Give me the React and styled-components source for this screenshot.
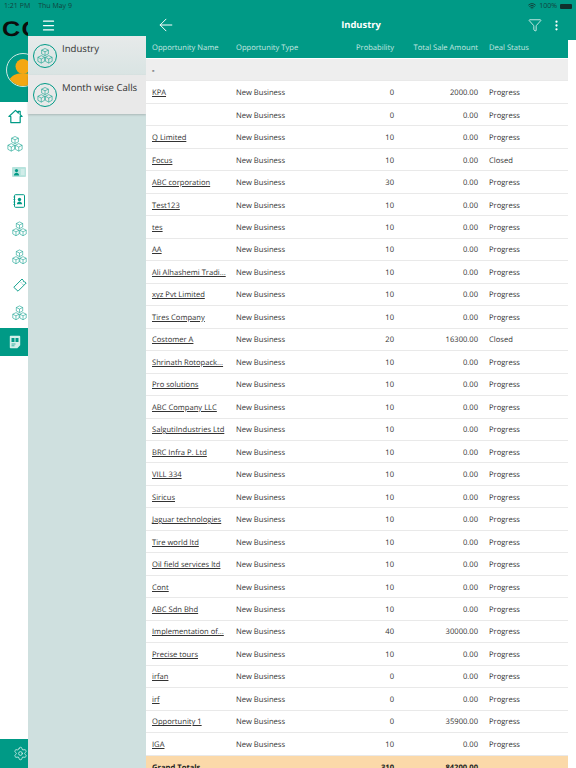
import React from 'react';
import styled, { createGlobalStyle } from 'styled-components';
import { ArrowLeft, Funnel, EllipsisVertical, Settings, Menu, Wifi } from 'lucide-react';

const teal = '#009a86';

const GlobalStyle = createGlobalStyle`
  html, body { margin: 0; padding: 0; height: 100%; }
  body {
    font-family: "Open Sans", "Noto Sans", "Liberation Sans", sans-serif;
    background: #fff;
    overflow: hidden;
    text-rendering: geometricPrecision;
  }
`;

const Page = styled.div`
  position: relative;
  display: flex;
  width: 576px;
  height: 768px;
  overflow: hidden;
`;

const StatusBar = styled.div`
  position: absolute;
  top: 0;
  left: 0;
  right: 0;
  height: 12px;
  display: flex;
  justify-content: space-between;
  align-items: center;
  padding: 0 4px;
  font-size: 7px;
  color: #12433d;
  z-index: 5;
`;

const StatusGroup = styled.div`
  display: flex;
  align-items: center;
  gap: ${(p) => p.$gap || 8}px;
`;

const Battery = styled.span`
  display: inline-block;
  width: 12px;
  height: 5px;
  background: #10302c;
  border-radius: 1px;
`;

const Rail = styled.aside`
  width: 28px;
  flex: none;
  display: flex;
  flex-direction: column;
  background: #fff;
  overflow: hidden;
`;

const RailHead = styled.div`
  height: 102px;
  flex: none;
  background: ${teal};
  padding: 19px 0 0 2px;
  box-sizing: border-box;
`;

const Logo = styled.div`
  font-family: "Liberation Sans", sans-serif;
  font-size: 21px;
  font-weight: 700;
  line-height: 21px;
  letter-spacing: 1px;
  color: #0c0c0c;
  white-space: nowrap;
  transform: scaleX(1.2);
  transform-origin: left center;
`;

const Avatar = styled.div`
  width: 32px;
  height: 32px;
  margin: 13px 0 0 4px;
  border: 1px solid #cfe8e3;
  border-radius: 50%;
  overflow: hidden;
  background: ${teal};
`;

const RailItem = styled.div`
  height: 28.2px;
  flex: none;
  display: flex;
  align-items: center;
  justify-content: center;
  box-sizing: border-box;
  padding-left: ${(p) => p.$inset || 0}px;
  color: ${(p) => (p.$active ? '#fff' : teal)};
  background: ${(p) => (p.$active ? teal : 'transparent')};
`;

const RailFoot = styled(RailItem)`
  height: 29px;
  margin-top: auto;
  background: ${teal};
  color: #d9f2ee;
`;

const SidePanel = styled.nav`
  width: 118px;
  flex: none;
  display: flex;
  flex-direction: column;
  background: #cfe0df;
`;

const PanelHead = styled.div`
  height: 36px;
  flex: none;
  background: ${teal};
  display: flex;
  align-items: center;
  padding: 14px 0 0 12.5px;
  box-sizing: border-box;
  color: #fff;
`;

const PanelItem = styled.div`
  height: 39px;
  flex: none;
  display: flex;
  gap: 5px;
  padding: 6px 0 0 5px;
  box-sizing: border-box;
  font-size: 9.6px;
  line-height: 13px;
  color: #333;
  background: ${(p) => (p.$last ? '#e9e9e9' : 'linear-gradient(#e7eaea, #d9e4e3)')};
  box-shadow: ${(p) => (p.$last ? '0 1px 2px rgba(0,0,0,.18)' : 'none')};
`;

const PanelBadge = styled.span`
  width: 22px;
  height: 22px;
  margin-top: 2px;
  flex: none;
  display: flex;
  align-items: center;
  justify-content: center;
  border: 1px solid ${teal};
  border-radius: 50%;
  color: ${teal};
`;

const Main = styled.main`
  flex: 1;
  min-width: 0;
  display: flex;
  flex-direction: column;
  background: #fff;
`;

const NavBar = styled.header`
  height: 40px;
  flex: none;
  display: flex;
  align-items: center;
  padding: 14px 13.5px 4px 10px;
  box-sizing: border-box;
  background: ${teal};
  color: #fff;
`;

const NavTitle = styled.h1`
  flex: 1;
  margin: 0;
  padding-left: 18.5px;
  text-align: center;
  font-size: 9.4px;
  font-weight: 700;
  line-height: 14px;
`;

const NavActions = styled.div`
  display: flex;
  align-items: center;
  gap: 8px;
`;

const Table = styled.div`
  width: 422px;
  display: flex;
  flex-direction: column;
  font-size: 7.6px;
  color: #333;
`;

const Row = styled.div`
  display: grid;
  grid-template-columns: 84px 100px 58px 84px 90px;
  align-items: center;
  height: 22.47px;
  flex: none;
  padding: 2px 0 0 6px;
  box-sizing: border-box;
  border-bottom: 1px solid #e9e9e9;
  white-space: nowrap;
`;

const HeadRow = styled(Row)`
  height: 18px;
  padding: 0 0 3px 6px;
  background: ${teal};
  color: #c5e7e1;
  border: 0;
`;

const GroupRow = styled(Row)`
  background: #eeeeee;
  margin-top: 1px;
  font-weight: 700;
`;

const TotalRow = styled(Row)`
  background: #fbd9a9;
  border: 0;
  font-weight: 700;
  color: #222;
`;

const NameLink = styled.span`
  text-decoration: underline;
  text-decoration-thickness: 0.6px;
`;

const Num = styled.span`
  text-align: right;
`;

const Status = styled.span`
  padding-left: 11px;
`;

function CubesIcon({ size = 18 }) {
  return (
    <svg width={size} height={size} viewBox="0 0 24 24" fill="none" stroke="currentColor" strokeWidth=".9" strokeOpacity=".85" strokeLinejoin="round">
      <path d="M12 2l4.500 2.200v5L12 11.400 7.500 9.200v-5z" />
      <path d="M7.500 4.200L12 6.400l4.500-2.200M12 6.400v5" />
      <path d="M7 11.500l4.500 2.200v5.300L7 21.500 2.500 19v-5.300z" />
      <path d="M2.500 13.700L7 16l4.500-2.300M7 16v5.500" />
      <path d="M17 11.500l4.500 2.200v5.300L17 21.500 12.500 19v-5.300z" />
      <path d="M12.500 13.700L17 16l4.500-2.300M17 16v5.500" />
    </svg>
  );
}

function HomeIcon() {
  return (
    <svg width="15" height="15" viewBox="0 0 16 16" fill="none" stroke="currentColor" strokeWidth="1.300" strokeLinejoin="round">
      <path d="M1 8L8 1.500l3 2.800V2.500h2v3.700L15 8h-2v6.500H3V8z" />
    </svg>
  );
}

function TicketIcon() {
  return (
    <svg width="14" height="14" viewBox="0 0 14 14" fill="none" stroke="currentColor" strokeWidth=".9" strokeLinejoin="round">
      <path d="M.8 9.300L9 1l1.300 1.300a1.100 1.100 0 0 0 1.500 1.500L13.200 5 5 13.200z" />
      <path d="M8 4.500l.8.800M9.700 6.200l.6.600" />
    </svg>
  );
}

function CardIcon() {
  return (
    <svg width="14" height="12" viewBox="0 0 14 12">
      <rect x="0" y="1" width="14" height="10" rx="1" fill="currentColor" opacity=".28" />
      <circle cx="4.500" cy="4.600" r="1.600" fill="currentColor" />
      <path d="M1.800 9.500c.3-2 1.400-2.800 2.700-2.800s2.400.8 2.700 2.800z" fill="currentColor" />
      <path d="M8.800 4h3.800M8.800 6h3.800M8.800 8h3.800" stroke="#fff" strokeWidth=".7" />
    </svg>
  );
}

function BookIcon() {
  return (
    <svg width="12" height="14" viewBox="0 0 12 14">
      <rect x="1.500" y=".7" width="10" height="12.600" rx="1" fill="none" stroke="currentColor" />
      <path d="M.3 3h2M.3 5.500h2M.3 8h2M.3 10.500h2" stroke="currentColor" strokeWidth=".7" />
      <circle cx="6.500" cy="5.500" r="1.700" fill="currentColor" />
      <path d="M3.800 10.300c.3-2 1.400-2.800 2.700-2.800s2.400.8 2.700 2.800z" fill="currentColor" />
    </svg>
  );
}

function ReportIcon() {
  return (
    <svg width="12" height="14" viewBox="0 0 12 14">
      <path d="M.8 1.500a.8.8 0 0 1 .8-.8h8.800a.8.8 0 0 1 .8.800v8.700L8.300 13.300H1.600a.8.8 0 0 1-.8-.8z" fill="#d5efe9" />
      <path d="M2.500 3h3v4h-3zM6.500 3h3v4h-3z" fill={teal} />
      <path d="M2.500 9h4M2.500 10.800h3" stroke={teal} strokeWidth=".7" />
    </svg>
  );
}

function PersonIcon() {
  return (
    <svg width="32" height="32" viewBox="0 0 32 32">
      <circle cx="16" cy="12.500" r="7.500" fill="#f3a712" />
      <path d="M1 32c0-8 5-11.500 11-12.500h8c6 1 11 4.500 11 12.500z" fill="#f3a712" />
    </svg>
  );
}

const rows = [
  ['KPA', '0', '2000.00', 'Progress'],
  ['', '0', '0.00', 'Progress'],
  ['Q Limited', '10', '0.00', 'Progress'],
  ['Focus', '10', '0.00', 'Closed'],
  ['ABC corporation', '30', '0.00', 'Progress'],
  ['Test123', '10', '0.00', 'Progress'],
  ['tes', '10', '0.00', 'Progress'],
  ['AA', '10', '0.00', 'Progress'],
  ['Ali Alhashemi Tradi...', '10', '0.00', 'Progress'],
  ['xyz Pvt Limited', '10', '0.00', 'Progress'],
  ['Tires Company', '10', '0.00', 'Progress'],
  ['Costomer A', '20', '16300.00', 'Closed'],
  ['Shrinath Rotopack...', '10', '0.00', 'Progress'],
  ['Pro solutions', '10', '0.00', 'Progress'],
  ['ABC Company LLC', '10', '0.00', 'Progress'],
  ['SalgutiIndustries Ltd', '10', '0.00', 'Progress'],
  ['BRC Infra P. Ltd', '10', '0.00', 'Progress'],
  ['VILL 334', '10', '0.00', 'Progress'],
  ['Siricus', '10', '0.00', 'Progress'],
  ['Jaguar technologies', '10', '0.00', 'Progress'],
  ['Tire world ltd', '10', '0.00', 'Progress'],
  ['Oil field services ltd', '10', '0.00', 'Progress'],
  ['Cont', '10', '0.00', 'Progress'],
  ['ABC Sdn Bhd', '10', '0.00', 'Progress'],
  ['Implementation of...', '40', '30000.00', 'Progress'],
  ['Precise tours', '10', '0.00', 'Progress'],
  ['irfan', '0', '0.00', 'Progress'],
  ['irf', '0', '0.00', 'Progress'],
  ['Opportunity 1', '0', '35900.00', 'Progress'],
  ['IGA', '10', '0.00', 'Progress'],
];

export default function App() {
  return (
    <Page>
      <GlobalStyle />
      <StatusBar>
        <StatusGroup>
          <span>1:21 PM</span>
          <span>Thu May 9</span>
        </StatusGroup>
        <StatusGroup $gap={3}>
          <Wifi size={8} strokeWidth={3} />
          <span>100%</span>
          <Battery />
        </StatusGroup>
      </StatusBar>

      <Rail>
        <RailHead>
          <Logo>CO</Logo>
          <Avatar><PersonIcon /></Avatar>
        </RailHead>
        <RailItem $inset={2}><HomeIcon /></RailItem>
        <RailItem $inset={2}><CubesIcon /></RailItem>
        <RailItem $inset={10}><CardIcon /></RailItem>
        <RailItem $inset={10}><BookIcon /></RailItem>
        <RailItem $inset={11}><CubesIcon /></RailItem>
        <RailItem $inset={11}><CubesIcon /></RailItem>
        <RailItem $inset={11}><TicketIcon /></RailItem>
        <RailItem $inset={11}><CubesIcon /></RailItem>
        <RailItem $active $inset={2}><ReportIcon /></RailItem>
        <RailFoot $inset={12}><Settings size={15} strokeWidth={1.3} /></RailFoot>
      </Rail>

      <SidePanel>
        <PanelHead><Menu size={15} strokeWidth={2} /></PanelHead>
        <PanelItem>
          <PanelBadge><CubesIcon /></PanelBadge>
          <span>Industry</span>
        </PanelItem>
        <PanelItem $last>
          <PanelBadge><CubesIcon /></PanelBadge>
          <span>Month wise Calls</span>
        </PanelItem>
      </SidePanel>

      <Main>
        <NavBar>
          <ArrowLeft size={20} strokeWidth={1.2} />
          <NavTitle>Industry</NavTitle>
          <NavActions>
            <Funnel size={14} strokeWidth={1.3} />
            <EllipsisVertical size={13} strokeWidth={2.2} />
          </NavActions>
        </NavBar>
        <Table>
          <HeadRow>
            <span>Opportunity Name</span>
            <span>Opportunity Type</span>
            <Num>Probability</Num>
            <Num>Total Sale Amount</Num>
            <Status>Deal Status</Status>
          </HeadRow>
          <GroupRow><span>-</span></GroupRow>
          {rows.map(([name, prob, amount, status], i) => (
            <Row key={i}>
              <NameLink>{name}</NameLink>
              <span>New Business</span>
              <Num>{prob}</Num>
              <Num>{amount}</Num>
              <Status>{status}</Status>
            </Row>
          ))}
          <TotalRow>
            <span>Grand Totals</span>
            <span />
            <Num>310</Num>
            <Num>84200.00</Num>
            <span />
          </TotalRow>
        </Table>
      </Main>
    </Page>
  );
}
